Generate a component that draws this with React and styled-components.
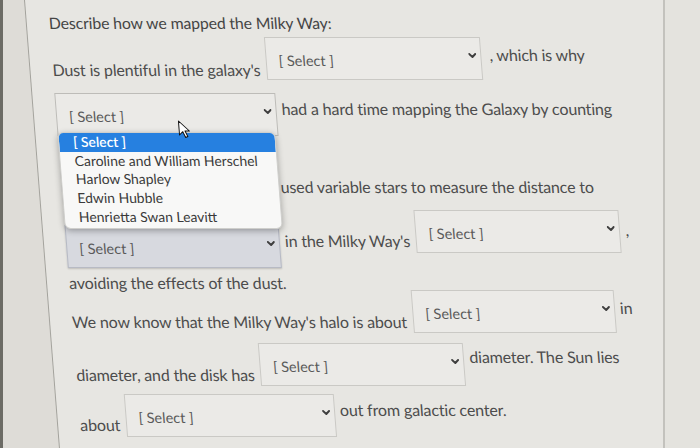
import React from 'react';
import styled, { createGlobalStyle } from 'styled-components';

const Global = createGlobalStyle`
  html, body { margin: 0; padding: 0; }
  body {
    width: 700px;
    height: 448px;
    overflow: hidden;
    background: #e3e2dd;
    font-family: Lato, "Open Sans", "Liberation Sans", sans-serif;
  }
`;

const Page = styled.div`
  display: flex;
  width: 700px;
  height: 448px;
  overflow: hidden;
  background: #e2e1dc;
`;

const Edge = styled.div`
  flex: none;
  width: 3px;
  background: #6c6b65;
`;

const Sheet = styled.div`
  flex: none;
  width: 660px;
  height: 448px;
  position: relative;
  overflow: hidden;
  background: #dedcd7;
  border-right: 2px solid #c3c2bd;
`;

const Margin = styled.div`
  flex: 1;
  background: #e4e3de;
`;

const Panel = styled.div`
  margin-left: 21px;
  width: 700px;
  height: 470px;
  box-sizing: border-box;
  padding: 13px 0 0 22px;
  background: #e7e6e2;
  border-left: 1px solid #a3a29c;
  transform: skewX(4.46deg);
  transform-origin: 0 0;
`;

const Title = styled.div`
  height: 20px;
  line-height: 20px;
  font-size: 15.8px;
  letter-spacing: -0.12px;
  color: #454545;
  white-space: nowrap;
`;

const Line = styled.div`
  display: flex;
  align-items: flex-end;
  height: ${(p) => (p.$plain ? 20 : 43)}px;
  margin-top: ${(p) => p.$mt}px;
  white-space: nowrap;
`;

const Text = styled.span`
  flex: none;
  font-size: 16px;
  letter-spacing: -0.15px;
  line-height: 20px;
  color: #4d4d4d;
  margin-bottom: ${(p) => p.$lift || 0}px;
  margin-left: ${(p) => p.$gap || 0}px;
`;

const Box = styled.div`
  flex: none;
  position: relative;
  box-sizing: border-box;
  width: ${(p) => p.$w}px;
  height: 43px;
  margin: 0 5px ${(p) => p.$lift || 0}px ${(p) => (p.$first ? 0 : 6)}px;
  padding: 4px 0 0 12px;
  display: flex;
  align-items: center;
  font-size: 14.5px;
  color: #5a5a5a;
  background: ${(p) => (p.$focus ? '#d7d9df' : '#ebeae7')};
  border: 1px solid ${(p) => (p.$focus ? '#b7bac4' : p.$open ? '#bdbcb8' : '#cac9c5')};
  box-shadow: ${(p) => (p.$focus ? '0 1px 2px rgba(0,0,0,0.18)' : 'none')};
`;

const Chevron = styled.svg`
  position: absolute;
  right: 4px;
  top: 15px;
  width: 8px;
  height: 5px;
`;

const Menu = styled.ul`
  position: absolute;
  z-index: 10;
  top: 38px;
  left: -1px;
  width: calc(100% - 3px);
  margin: 0;
  padding: 0 0 2px 0;
  list-style: none;
  background: #f8f8f7;
  border: 1px solid #cfcfcc;
  border-radius: 6px;
  overflow: hidden;
  box-shadow: 0 2px 6px rgba(0, 0, 0, 0.3);
`;

const Option = styled.li`
  height: 18.7px;
  line-height: 18.7px;
  padding-left: 14px;
  font-size: 13.9px;
  color: ${(p) => (p.$active ? '#ffffff' : '#3a3a3a')};
  background: ${(p) => (p.$active ? '#2680e0' : 'transparent')};
  font-weight: ${(p) => (p.$active ? 600 : 400)};
`;

const Cursor = styled.svg`
  position: absolute;
  z-index: 11;
  left: 120px;
  top: 26px;
  width: 13px;
  height: 19px;
`;

const options = [
  '[ Select ]',
  'Caroline and William Herschel',
  'Harlow Shapley',
  'Edwin Hubble',
  'Henrietta Swan Leavitt',
];

function Select({ w, lift, first, focus, open }) {
  return (
    <Box $w={w} $lift={lift} $first={first} $focus={focus} $open={open}>
      [ Select ]
      <Chevron viewBox="0 0 8 5">
        <path d="M1 1 L4 4 L7 1" fill="none" stroke="#3f3f3f" strokeWidth="1.9" strokeLinecap="round" strokeLinejoin="round" />
      </Chevron>
      {open && (
        <>
          <Menu>
            {options.map((o, i) => (
              <Option key={o} $active={i === 0}>{o}</Option>
            ))}
          </Menu>
          <Cursor viewBox="0 0 13 19">
            <path d="M1 1 L1 15 L4.5 11.7 L7 17.5 L9.2 16.5 L6.8 11 L11.2 11 Z" fill="#ffffff" stroke="#111111" strokeWidth="1" strokeLinejoin="round" />
          </Cursor>
        </>
      )}
    </Box>
  );
}

export default function App() {
  return (
    <>
      <Global />
      <Page>
        <Edge />
        <Sheet>
          <Panel>
            <Title>Describe how we mapped the Milky Way:</Title>
            <Line $mt={4}>
              <Text>Dust is plentiful in the galaxy's</Text>
              <Select w={216} />
              <Text $lift={15} $gap={3}>, which is why</Text>
            </Line>
            <Line $mt={13}>
              <Select w={221} first open />
              <Text $lift={17}>had a hard time mapping the Galaxy by counting</Text>
            </Line>
            <Line $mt={31}>
              <Select w={214} first />
              <Text $lift={13}>used variable stars to measure the distance to</Text>
            </Line>
            <Line $mt={15}>
              <Select w={214} first focus />
              <Text $lift={17}>in the Milky Way's</Text>
              <Select w={205} lift={15} />
              <Text $lift={28}>,</Text>
            </Line>
            <Line $plain $mt={5}>
              <Text>avoiding the effects of the dust.</Text>
            </Line>
            <Line $mt={-3}>
              <Text $lift={1}>We now know that the Milky Way's halo is about</Text>
              <Select w={203} />
              <Text $lift={15}>in</Text>
            </Line>
            <Line $mt={10}>
              <Text $lift={1}>diameter, and the disk has</Text>
              <Select w={205} />
              <Text $lift={19}>diameter. The Sun lies</Text>
            </Line>
            <Line $mt={8}>
              <Text $lift={2}>about</Text>
              <Select w={210} />
              <Text $lift={17}>out from galactic center.</Text>
            </Line>
          </Panel>
        </Sheet>
        <Margin />
      </Page>
    </>
  );
}
